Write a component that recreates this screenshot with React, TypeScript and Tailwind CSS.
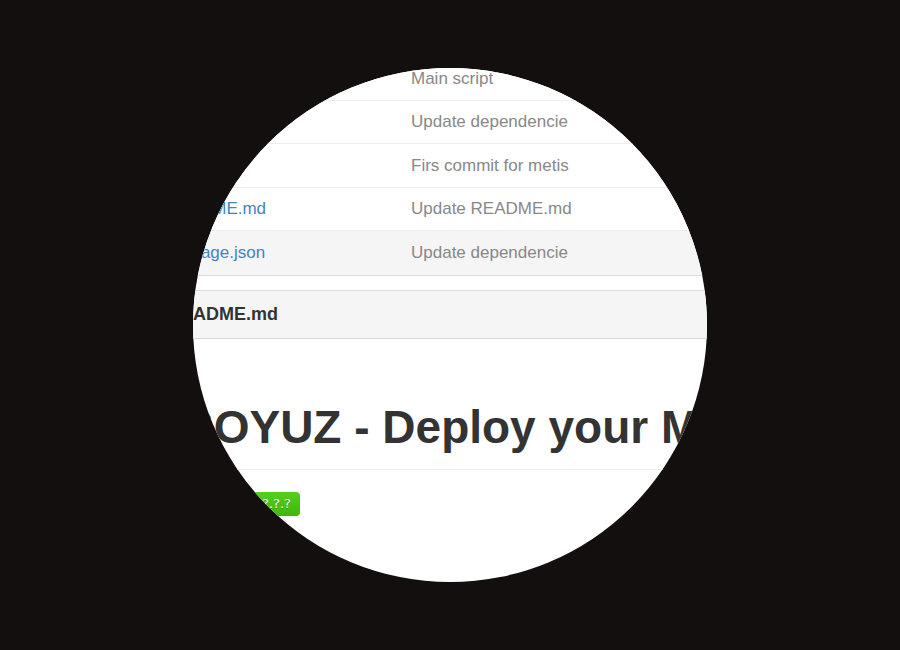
import React from "react";

const rows = [
  { name: "bin", msg: "Main script", hover: false },
  { name: "lib", msg: "Update dependencie", hover: false },
  { name: ".gitignore", msg: "Firs commit for metis", hover: false },
  { name: "README.md", msg: "Update README.md", hover: false },
  { name: "package.json", msg: "Update dependencie", hover: true },
];

function FileIcon() {
  return (
    <svg width="14" height="16" viewBox="0 0 12 16" fill="#777">
      <path d="M6 5H2V4h4v1zM2 8h7V7H2v1zm0 2h7V9H2v1zm0 2h7v-1H2v1zm10-7.5V14c0 .55-.45 1-1 1H1c-.55 0-1-.45-1-1V2c0-.55.45-1 1-1h7.5L12 4.5zM11 5L8 2H1v12h10V5z" />
    </svg>
  );
}

export default function App() {
  return (
    <div className="w-[900px] h-[650px] bg-[#120f0e] flex items-center justify-center">
      <div className="relative w-[514px] h-[514px] rounded-full overflow-hidden bg-white">
        <div className="ml-[-60px] mt-[-11px] w-[840px] font-['Liberation_Sans',Arial,sans-serif]">
          <div className="border-x border-b border-[#ddd]">
            {rows.map((r, i) => (
              <div
                key={i}
                className={
                  "h-[43.5px] flex items-center text-[17px] " +
                  (i < rows.length - 1 ? "border-b border-[#eee] " : "") +
                  (r.hover ? "bg-[#f5f5f5]" : "bg-white")
                }
              >
                <div className="w-[31px] flex justify-center">
                  <FileIcon />
                </div>
                <div className="w-[246px] text-[#4183c4] whitespace-nowrap">{r.name}</div>
                <div className="flex-1 text-[#888] whitespace-nowrap">{r.msg}</div>
              </div>
            ))}
          </div>

          <div className="mt-[14px] border border-[#ddd] rounded-[3px]">
            <div className="h-[48px] bg-[#f5f5f5] border-b border-[#d8d8d8] flex items-center pl-[34px] font-bold text-[18px] text-[#333]">
              README.md
            </div>
            <div className="pl-[49px] pt-[60px] pb-[200px]">
              <h1 className="text-[46px] font-bold leading-[1.25] pb-[13px] border-b border-[#eee] text-[#333] whitespace-nowrap">
                SOYUZ - Deploy your Meteor apps
              </h1>
              <div className="mt-[22px] inline-flex h-[24px] rounded-[4px] overflow-hidden text-[13px] text-white font-['DejaVu_Sans',Verdana,sans-serif]">
                <span className="w-[69px] flex items-center justify-center bg-gradient-to-b from-[#6a6a6a] to-[#4a4a4a]">
                  version
                </span>
                <span className="flex items-center pl-[10px] pr-[9px] bg-gradient-to-b from-[#55d01f] to-[#3cb70a] [text-shadow:0_1px_0_rgba(1,1,1,0.3)]">
                  ?.?.?
                </span>
              </div>
            </div>
          </div>
        </div>
      </div>
    </div>
  );
}
